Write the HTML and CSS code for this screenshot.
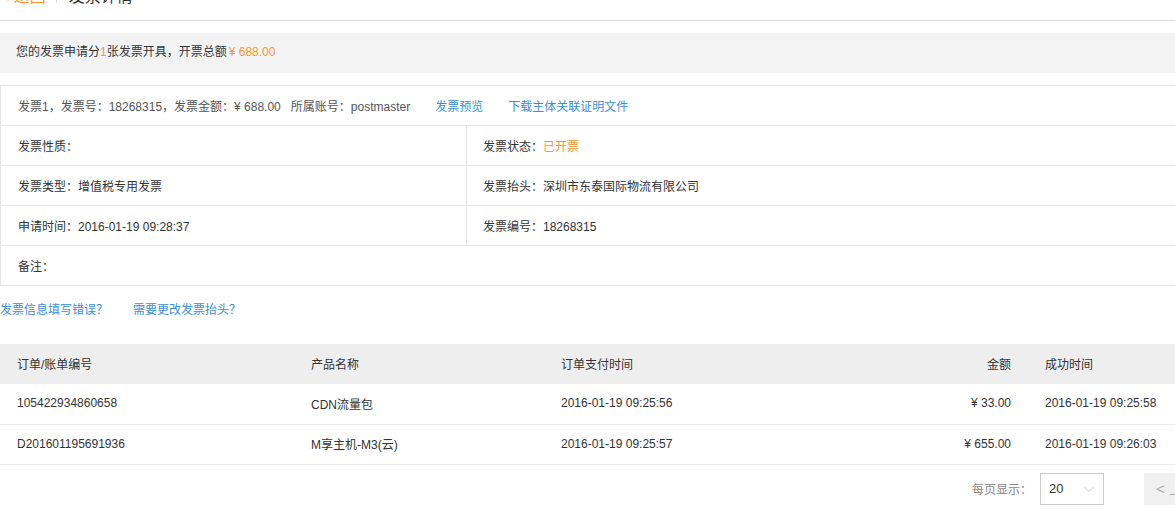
FILE: index.html
```html
<!DOCTYPE html>
<html lang="zh-CN">
<head>
    <meta charset="UTF-8">
    <meta name="viewport" content="width=device-width, initial-scale=1.0">
    <title>发票详情</title>
    <link rel="stylesheet" href="styles.css">
</head>
<body>
    <div class="page">
        <div class="title-bar">
            <a class="back">&lt; 返回</a>
            <span class="sep"></span>
            <span class="title">发票详情</span>
        </div>

        <div class="summary">
            您的发票申请分<span class="orange">1</span>张发票开具，开票总额<span class="orange amount">¥ 688.00</span>
        </div>

        <div class="invoice">
            <div class="inv-head">
                <span>发票1，发票号：18268315，发票金额：¥ 688.00&nbsp;&nbsp;&nbsp;所属账号：postmaster</span>
                <a class="link">发票预览</a>
                <a class="link">下载主体关联证明文件</a>
            </div>
            <div class="inv-row">
                <div class="cell">发票性质：</div>
                <div class="cell right">发票状态：<span class="orange">已开票</span></div>
            </div>
            <div class="inv-row">
                <div class="cell">发票类型：增值税专用发票</div>
                <div class="cell right">发票抬头：深圳市东泰国际物流有限公司</div>
            </div>
            <div class="inv-row">
                <div class="cell">申请时间：2016-01-19 09:28:37</div>
                <div class="cell right">发票编号：18268315</div>
            </div>
            <div class="inv-row">
                <div class="cell">备注：</div>
            </div>
        </div>

        <div class="help">
            <a class="link">发票信息填写错误？</a>
            <a class="link">需要更改发票抬头？</a>
        </div>

        <table class="orders">
            <colgroup>
                <col style="width:294px">
                <col style="width:250px">
                <col style="width:300px">
                <col style="width:184px">
                <col>
            </colgroup>
            <thead>
                <tr>
                    <th>订单/账单编号</th>
                    <th>产品名称</th>
                    <th>订单支付时间</th>
                    <th class="num">金额</th>
                    <th>成功时间</th>
                </tr>
            </thead>
            <tbody>
                <tr>
                    <td>105422934860658</td>
                    <td>CDN流量包</td>
                    <td>2016-01-19 09:25:56</td>
                    <td class="num">¥ 33.00</td>
                    <td>2016-01-19 09:25:58</td>
                </tr>
                <tr>
                    <td>D201601195691936</td>
                    <td>M享主机-M3(云)</td>
                    <td>2016-01-19 09:25:57</td>
                    <td class="num">¥ 655.00</td>
                    <td>2016-01-19 09:26:03</td>
                </tr>
            </tbody>
        </table>

        <div class="pager">
            <span class="per">每页显示：</span>
            <div class="select">
                <span>20</span>
                <svg width="12" height="8" viewBox="0 0 12 8"><path d="M1 1.5 L6 6.5 L11 1.5" fill="none" stroke="#c8c8c8" stroke-width="1"/></svg>
            </div>
            <div class="prev">&lt; 上</div>
        </div>
    </div>
</body>
</html>
```

FILE: styles.css
```css
* {
    margin: 0;
    padding: 0;
    box-sizing: border-box;
}
body {
    font-family: "Liberation Sans", Arial, "Noto Sans CJK TC", sans-serif;
    font-size: 12px;
    color: #333;
    background: #fff;
    overflow: hidden;
    text-spacing-trim: space-all;
}
a {
    cursor: pointer;
}
.page {
    width: 1200px;
    margin-top: -20px;
}
.title-bar {
    display: flex;
    align-items: center;
    height: 41px;
    padding-bottom: 10px;
    border-bottom: 1px solid #ddd;
    font-size: 16px;
}
.back {
    color: #f39833;
}
.sep {
    width: 1px;
    height: 16px;
    background: #ddd;
    margin: 0 12px 0 10px;
}
.title {
    color: #333;
}
.summary {
    margin-top: 12px;
    height: 40px;
    line-height: 39px;
    padding-left: 16px;
    background: #f3f3f3;
    color: #333;
}
.orange {
    color: #f39833;
}
.amount {
    margin-left: 2px;
}
.invoice {
    margin-top: 12px;
    border: 1px solid #e6e6e6;
    border-bottom: none;
}
.inv-head,
.inv-row {
    display: flex;
    height: 40px;
    align-items: center;
    border-bottom: 1px solid #e6e6e6;
}
.inv-head {
    padding-left: 17px;
    padding-bottom: 1px;
    color: #555;
}
.inv-head .link {
    margin-left: 25px;
}
.cell {
    width: 465px;
    height: 100%;
    display: flex;
    align-items: center;
    padding-left: 17px;
    padding-bottom: 1px;
}
.cell.right {
    flex: 1;
    border-left: 1px solid #e6e6e6;
    padding-left: 16px;
}
.link {
    color: #3a8fd9;
}
.help {
    display: flex;
    gap: 25px;
    height: 44px;
    align-items: center;
}
.orders {
    width: 1200px;
    margin-top: 14px;
    border-collapse: collapse;
    table-layout: fixed;
}
.orders th,
.orders td {
    height: 40px;
    padding: 0 17px 1px;
    text-align: left;
    font-weight: normal;
    white-space: nowrap;
}
.orders th {
    background: #eee;
    color: #333;
}
.orders td {
    border-bottom: 1px solid #e8e8e8;
    color: #333;
}
.orders .num {
    text-align: right;
}
.pager {
    display: flex;
    justify-content: flex-end;
    align-items: center;
    width: 1175px;
    margin-top: 8px;
}
.per {
    color: #888;
    margin-right: 8px;
}
.select {
    width: 64px;
    height: 32px;
    border: 1px solid #ccc;
    display: flex;
    align-items: center;
    justify-content: space-between;
    padding: 0 8px 0 8px;
    font-size: 13px;
    margin-right: 40px;
}
.prev {
    width: 31px;
    height: 32px;
    background: #f0f0f0;
    color: #aaa;
    font-size: 15px;
    line-height: 32px;
    padding-left: 12px;
    white-space: nowrap;
    overflow: hidden;
}
```
